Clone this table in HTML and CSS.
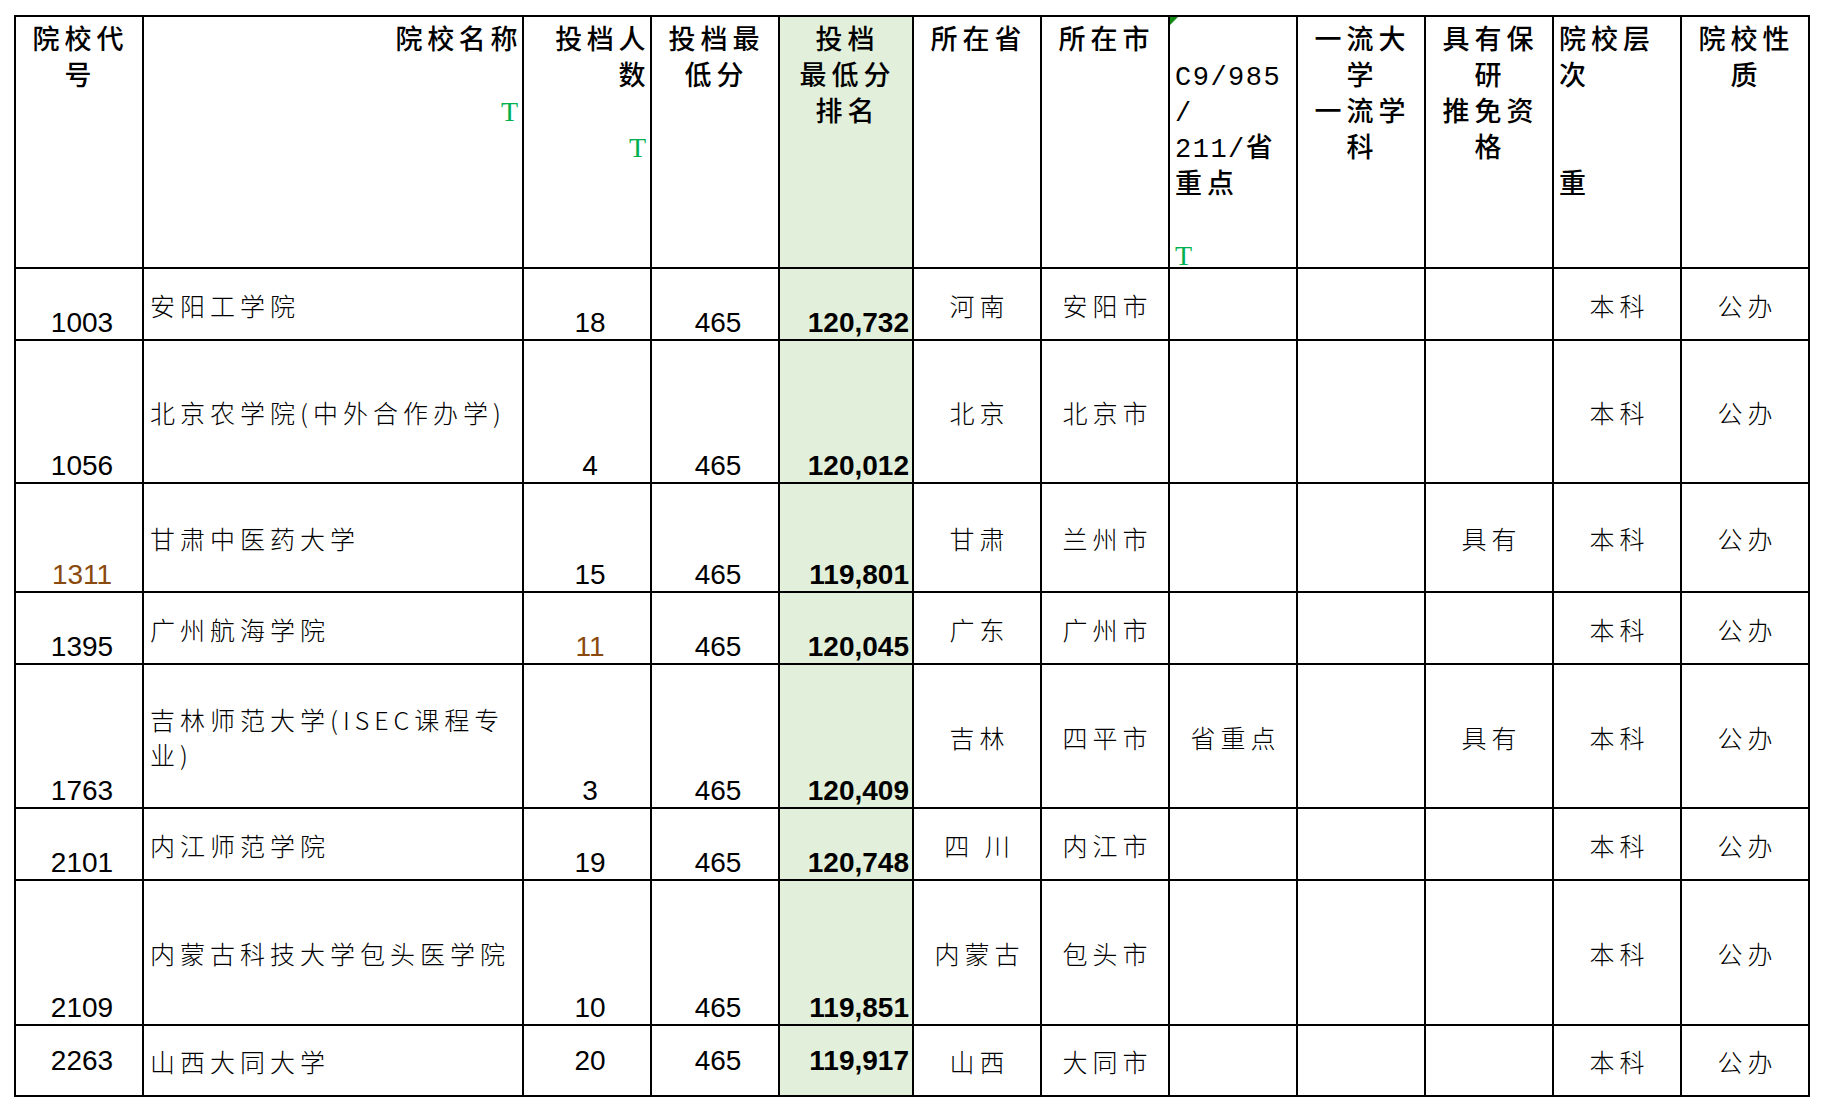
FILE: index.html
```html
<!DOCTYPE html>
<html lang="zh-CN">
<head>
<meta charset="utf-8">
<title>投档情况</title>
<link rel="stylesheet" href="styles.css">
</head>
<body>
<div class="sheet">
  <!-- header -->
  <div class="h ctr">院校代<br>号</div>
  <div class="h rt">院校名称<br><br><span class="t">T</span></div>
  <div class="h rt">投档人<br>数<br><br><span class="t">T</span></div>
  <div class="h ctr">投档最<br>低分</div>
  <div class="h ctr green">投档<br>最低分<br>排名</div>
  <div class="h ctr">所在省</div>
  <div class="h ctr">所在市</div>
  <div class="h lt flag"><br><span class="lat">C9/985</span><br><span class="lat">/</span><br><span class="lat">211/</span>省<br>重点<br><br><span class="t">T</span></div>
  <div class="h ctr">一流大<br>学<br>一流学<br>科</div>
  <div class="h ctr">具有保<br>研<br>推免资<br>格</div>
  <div class="h lt">院校层<br>次<br><br><br>重</div>
  <div class="h ctr">院校性<br>质</div>

  <!-- row 1 -->
  <div class="num">1003</div>
  <div class="name">安阳工学院</div>
  <div class="num">18</div>
  <div class="num">465</div>
  <div class="num rank">120,732</div>
  <div class="cn">河南</div>
  <div class="cn">安阳市</div>
  <div class="cn"></div>
  <div class="cn"></div>
  <div class="cn"></div>
  <div class="cn">本科</div>
  <div class="cn">公办</div>

  <!-- row 2 -->
  <div class="num">1056</div>
  <div class="name">北京农学院(中外合作办学)</div>
  <div class="num">4</div>
  <div class="num">465</div>
  <div class="num rank">120,012</div>
  <div class="cn">北京</div>
  <div class="cn">北京市</div>
  <div class="cn"></div>
  <div class="cn"></div>
  <div class="cn"></div>
  <div class="cn">本科</div>
  <div class="cn">公办</div>

  <!-- row 3 -->
  <div class="num brown">1311</div>
  <div class="name">甘肃中医药大学</div>
  <div class="num">15</div>
  <div class="num">465</div>
  <div class="num rank">119,801</div>
  <div class="cn">甘肃</div>
  <div class="cn">兰州市</div>
  <div class="cn"></div>
  <div class="cn"></div>
  <div class="cn">具有</div>
  <div class="cn">本科</div>
  <div class="cn">公办</div>

  <!-- row 4 -->
  <div class="num">1395</div>
  <div class="name">广州航海学院</div>
  <div class="num brown">11</div>
  <div class="num">465</div>
  <div class="num rank">120,045</div>
  <div class="cn">广东</div>
  <div class="cn">广州市</div>
  <div class="cn"></div>
  <div class="cn"></div>
  <div class="cn"></div>
  <div class="cn">本科</div>
  <div class="cn">公办</div>

  <!-- row 5 -->
  <div class="num">1763</div>
  <div class="name">吉林师范大学(ISEC课程专<br>业)</div>
  <div class="num">3</div>
  <div class="num">465</div>
  <div class="num rank">120,409</div>
  <div class="cn">吉林</div>
  <div class="cn">四平市</div>
  <div class="cn">省重点</div>
  <div class="cn"></div>
  <div class="cn">具有</div>
  <div class="cn">本科</div>
  <div class="cn">公办</div>

  <!-- row 6 -->
  <div class="num">2101</div>
  <div class="name">内江师范学院</div>
  <div class="num">19</div>
  <div class="num">465</div>
  <div class="num rank">120,748</div>
  <div class="cn">四 川</div>
  <div class="cn">内江市</div>
  <div class="cn"></div>
  <div class="cn"></div>
  <div class="cn"></div>
  <div class="cn">本科</div>
  <div class="cn">公办</div>

  <!-- row 7 -->
  <div class="num">2109</div>
  <div class="name">内蒙古科技大学包头医学院</div>
  <div class="num">10</div>
  <div class="num">465</div>
  <div class="num rank">119,851</div>
  <div class="cn">内蒙古</div>
  <div class="cn">包头市</div>
  <div class="cn"></div>
  <div class="cn"></div>
  <div class="cn"></div>
  <div class="cn">本科</div>
  <div class="cn">公办</div>

  <!-- row 8 -->
  <div class="num mid">2263</div>
  <div class="name">山西大同大学</div>
  <div class="num mid">20</div>
  <div class="num mid">465</div>
  <div class="num rank mid">119,917</div>
  <div class="cn">山西</div>
  <div class="cn">大同市</div>
  <div class="cn"></div>
  <div class="cn"></div>
  <div class="cn"></div>
  <div class="cn">本科</div>
  <div class="cn">公办</div>
</div>
</body>
</html>
```

FILE: styles.css
```css
html, body {
  margin: 0;
  padding: 0;
  background: #ffffff;
}

body {
  font-family: "Noto Sans CJK SC", sans-serif;
  color: #000000;
}

.sheet {
  display: grid;
  width: max-content;
  margin: 15px 0 0 14px;
  padding: 2px;
  gap: 2px;
  background: #000000;
  grid-template-columns: 126px 378px 126px 126px 132px 126px 126px 126px 126px 126px 126px 126px;
  grid-template-rows: 250px 70px 141px 107px 70px 142px 70px 143px 69px;
}

.sheet > div {
  background: #ffffff;
  box-sizing: border-box;
  min-width: 0;
}

/* header cells */
.h {
  font-family: "Noto Sans CJK SC", sans-serif;
  font-size: 27px;
  font-weight: 500;
  line-height: 36px;
  letter-spacing: 5px;
  padding: 3px 2px 0 2px;
  white-space: nowrap;
}

.h.ctr {
  text-align: center;
  padding-left: 5px;
}

.h.rt {
  text-align: right;
  padding-right: 0;
  letter-spacing: 4.6px;
}

.h.lt {
  text-align: left;
  padding-left: 5px;
}

.sheet > .green,
.sheet > .rank {
  background: #e2efda;
}

.t {
  font-family: "Liberation Serif", serif;
  font-weight: normal;
  font-size: 28px;
  line-height: 20px;
  color: #00b050;
  letter-spacing: 0;
  padding-right: 4px;
}

.lat {
  font-family: "Liberation Mono", monospace;
  font-size: 27px;
  line-height: 20px;
  letter-spacing: 1.5px;
}

.flag {
  position: relative;
}

.flag::before {
  content: "";
  position: absolute;
  top: 0;
  left: 0;
  width: 0;
  height: 0;
  border-top: 8px solid #138a13;
  border-right: 8px solid transparent;
}

/* data cells */
.num {
  display: flex;
  align-items: flex-end;
  justify-content: center;
  font-family: "Liberation Sans", Arial, sans-serif;
  font-size: 28px;
  line-height: 28px;
  padding-bottom: 2px;
  padding-left: 6px;
}

.num.rank {
  justify-content: flex-end;
  font-weight: bold;
  padding-left: 0;
  padding-right: 3px;
}

.num.mid {
  align-items: center;
  padding-bottom: 0;
}

.brown {
  color: #8a4a0e;
}

.name,
.cn {
  display: flex;
  align-items: center;
  font-family: "Noto Sans CJK SC", sans-serif;
  font-size: 25px;
  font-weight: 300;
  line-height: 35px;
  letter-spacing: 5px;
  padding-top: 2px;
}

.name {
  justify-content: flex-start;
  padding-left: 6px;
}

.cn {
  justify-content: center;
  padding-left: 5px;
  text-align: center;
  white-space: pre;
}
```
